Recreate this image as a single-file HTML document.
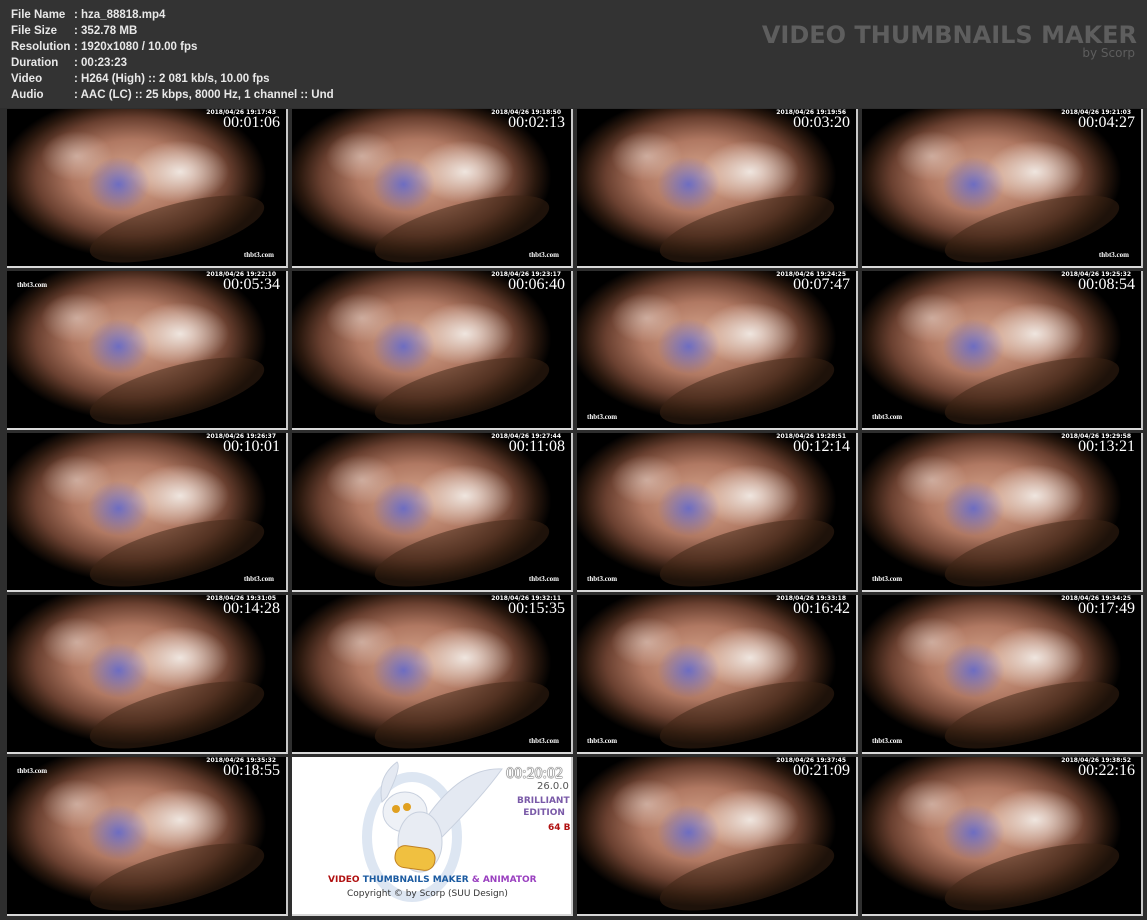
<!DOCTYPE html>
<html><head><meta charset="utf-8"><style>
body{margin:0;width:1147px;height:920px;background:#2e2e2e;position:relative;overflow:hidden;font-family:"DejaVu Sans","Liberation Sans",sans-serif}
.hdr{position:absolute;left:0;top:0;width:1147px;height:108px;background:#333}
.info{position:absolute;left:11px;top:7px;color:#e8e8e8;font-size:11.5px;font-weight:bold;line-height:16px;font-family:"Liberation Sans",sans-serif;white-space:nowrap}
.info span{display:inline-block;width:63px}
.title{position:absolute;right:10px;top:21px;color:#5e5e5e;font-weight:bold;font-size:24px;font-family:"DejaVu Sans",sans-serif}
.by{position:absolute;right:12px;top:46px;color:#5e5e5e;font-size:12px}
.c{position:absolute;width:279px;height:157px;border-right:2px solid #c8c8c8;border-bottom:2px solid #d8d8d8;overflow:hidden;
background:
radial-gradient(ellipse 14% 22% at 40% 48%,rgba(70,90,220,.7),rgba(0,0,0,0) 80%),
radial-gradient(ellipse 22% 25% at 62% 40%,rgba(245,240,235,.9),rgba(0,0,0,0) 80%),
radial-gradient(ellipse 16% 20% at 25% 30%,rgba(230,210,200,.6),rgba(0,0,0,0) 80%),
radial-gradient(ellipse 48% 52% at 45% 43%,#d8a890 0%,#b07862 45%,#6a4030 72%,#2a180e 88%,#000 100%);}
.c::after{content:"";position:absolute;left:80px;top:95px;width:180px;height:50px;border-radius:50%;background:rgba(60,35,20,.5);transform:rotate(-15deg)}
.t{position:absolute;right:6px;top:5px;color:#fff;font-family:"Liberation Serif",serif;font-size:16px;z-index:2;text-shadow:0 0 1px #000}
.d{position:absolute;right:10px;top:0px;color:#fff;font-size:6px;font-weight:bold;z-index:2}
.w{position:absolute;color:#fff;font-size:7px;font-weight:bold;z-index:2;font-family:"Liberation Serif",serif}
.br{right:12px;bottom:7px}.bl{left:10px;bottom:7px}.tl{left:10px;top:10px}
.logo{background:#fff!important}
.logo::after{display:none}
</style></head><body>
<div class="hdr">
<div class="info">
<div><span>File Name</span>: hza_88818.mp4</div>
<div><span>File Size</span>: 352.78 MB</div>
<div><span>Resolution</span>: 1920x1080 / 10.00 fps</div>
<div><span>Duration</span>: 00:23:23</div>
<div><span>Video</span>: H264 (High) :: 2 081 kb/s, 10.00 fps</div>
<div><span>Audio</span>: AAC (LC) :: 25 kbps, 8000 Hz, 1 channel :: Und</div>
</div>
<div class="title">VIDEO THUMBNAILS MAKER</div>
<div class="by">by Scorp</div>
</div>

<div class="c" style="left:7px;top:109px"><div class="d">2018/04/26 19:17:43</div><div class="t">00:01:06</div><div class="w br">thbt3.com</div></div>
<div class="c" style="left:292px;top:109px"><div class="d">2018/04/26 19:18:50</div><div class="t">00:02:13</div><div class="w br">thbt3.com</div></div>
<div class="c" style="left:577px;top:109px"><div class="d">2018/04/26 19:19:56</div><div class="t">00:03:20</div></div>
<div class="c" style="left:862px;top:109px"><div class="d">2018/04/26 19:21:03</div><div class="t">00:04:27</div><div class="w br">thbt3.com</div></div>

<div class="c" style="left:7px;top:271px"><div class="d">2018/04/26 19:22:10</div><div class="t">00:05:34</div><div class="w tl">thbt3.com</div></div>
<div class="c" style="left:292px;top:271px"><div class="d">2018/04/26 19:23:17</div><div class="t">00:06:40</div></div>
<div class="c" style="left:577px;top:271px"><div class="d">2018/04/26 19:24:25</div><div class="t">00:07:47</div><div class="w bl">thbt3.com</div></div>
<div class="c" style="left:862px;top:271px"><div class="d">2018/04/26 19:25:32</div><div class="t">00:08:54</div><div class="w bl">thbt3.com</div></div>

<div class="c" style="left:7px;top:433px"><div class="d">2018/04/26 19:26:37</div><div class="t">00:10:01</div><div class="w br">thbt3.com</div></div>
<div class="c" style="left:292px;top:433px"><div class="d">2018/04/26 19:27:44</div><div class="t">00:11:08</div><div class="w br">thbt3.com</div></div>
<div class="c" style="left:577px;top:433px"><div class="d">2018/04/26 19:28:51</div><div class="t">00:12:14</div><div class="w bl">thbt3.com</div></div>
<div class="c" style="left:862px;top:433px"><div class="d">2018/04/26 19:29:58</div><div class="t">00:13:21</div><div class="w bl">thbt3.com</div></div>

<div class="c" style="left:7px;top:595px"><div class="d">2018/04/26 19:31:05</div><div class="t">00:14:28</div></div>
<div class="c" style="left:292px;top:595px"><div class="d">2018/04/26 19:32:11</div><div class="t">00:15:35</div><div class="w br">thbt3.com</div></div>
<div class="c" style="left:577px;top:595px"><div class="d">2018/04/26 19:33:18</div><div class="t">00:16:42</div><div class="w bl">thbt3.com</div></div>
<div class="c" style="left:862px;top:595px"><div class="d">2018/04/26 19:34:25</div><div class="t">00:17:49</div><div class="w bl">thbt3.com</div></div>

<div class="c" style="left:7px;top:757px"><div class="d">2018/04/26 19:35:32</div><div class="t">00:18:55</div><div class="w tl">thbt3.com</div></div>
<div class="c logo" style="left:292px;top:757px">
<svg width="279" height="157" style="position:absolute;left:0;top:0">
<ellipse cx="120" cy="80" rx="45" ry="60" fill="none" stroke="#dde6f2" stroke-width="10"/>
<path d="M135 60 Q170 10 210 12 Q190 40 150 80 Z" fill="#e4e9f2" stroke="#c8d0de"/>
<path d="M95 40 Q110 10 105 5 Q85 20 90 45 Z" fill="#e4e9f2" stroke="#c8d0de"/>
<ellipse cx="113" cy="55" rx="22" ry="20" fill="#eef1f6" stroke="#c8d0de"/>
<ellipse cx="128" cy="85" rx="22" ry="30" fill="#e8ecf3" stroke="#c8d0de"/>
<circle cx="104" cy="52" r="4" fill="#e0a020"/><circle cx="115" cy="50" r="4" fill="#e0a020"/>
<rect x="103" y="90" width="40" height="22" rx="10" fill="#f0c040" stroke="#c08020" transform="rotate(8 123 101)"/>
</svg>
<div style="position:absolute;right:8px;top:8px;color:#fff;font-family:'Liberation Serif',serif;font-size:16px;text-shadow:0 0 1px #000,0 0 1px #000">00:20:02</div>
<div style="position:absolute;left:245px;top:24px;color:#555;font-size:10px;white-space:nowrap">26.0.0</div>
<div style="position:absolute;left:225px;top:38px;color:#7a5aa8;font-size:9px;font-weight:bold;line-height:12px;white-space:nowrap">BRILLIANT<br>&nbsp;&nbsp;EDITION</div>
<div style="position:absolute;left:256px;top:66px;color:#b01010;font-size:9px;font-weight:bold;white-space:nowrap">64 BIT</div>
<div style="position:absolute;left:36px;top:118px;font-size:9px;font-weight:bold;white-space:nowrap"><span style="color:#b01010">VIDEO</span> <span style="color:#1a5aa0">THUMBNAILS MAKER</span> <span style="color:#9a40c0">&amp; ANIMATOR</span></div>
<div style="position:absolute;left:55px;top:132px;font-size:9px;color:#333;white-space:nowrap">Copyright © by Scorp (SUU Design)</div>
</div>
<div class="c" style="left:577px;top:757px"><div class="d">2018/04/26 19:37:45</div><div class="t">00:21:09</div></div>
<div class="c" style="left:862px;top:757px"><div class="d">2018/04/26 19:38:52</div><div class="t">00:22:16</div></div>
</body></html>
